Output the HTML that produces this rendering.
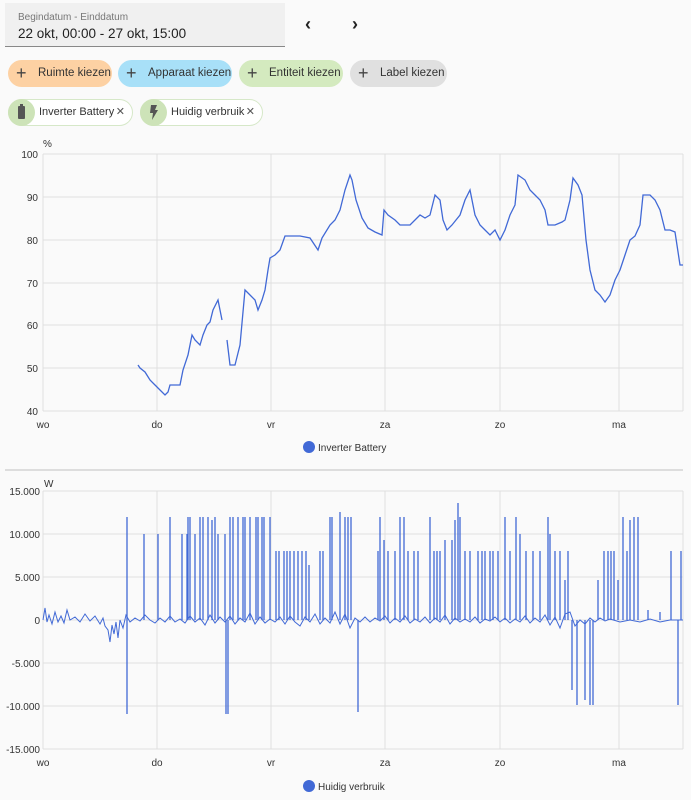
<!DOCTYPE html>
<html><head><meta charset="utf-8"><style>
body{margin:0;width:691px;height:800px;background:#fafafa;font-family:"Liberation Sans",sans-serif;overflow:hidden;position:relative}
.df{position:absolute;left:5px;top:3px;width:280px;height:43px;background:#f0f0f0;border-bottom:1px solid #888}
.df .l{position:absolute;left:13px;top:9px;font-size:10px;color:#777}
.df .v{position:absolute;left:13px;top:23px;font-size:13.5px;color:#222}
.nav{position:absolute;top:14px;font-size:18px;color:#222;font-weight:bold}
.chip{position:absolute;top:60px;height:27px;border-radius:14px;font-size:11.5px;color:#333;line-height:27px;box-sizing:border-box;padding-left:30px;white-space:nowrap}
.chip b{position:absolute;left:8px;top:0;font-weight:normal;font-size:18px;color:#444}
.ent{position:absolute;top:99px;height:27px;border-radius:14px;border:1px solid #d6e8c8;background:#fff;font-size:11px;color:#333;line-height:25px;box-sizing:border-box;padding-left:30px;white-space:nowrap}
.ent .ic{position:absolute;left:-1px;top:-1px;width:27px;height:27px;border-radius:14px;background:#cde3b8}
.ent .x{position:absolute;right:7px;top:0;font-size:11px;color:#555}
svg{position:absolute;left:0;top:0}
</style></head><body>
<div class="df"><div class="l">Begindatum - Einddatum</div><div class="v">22 okt, 00:00 - 27 okt, 15:00</div></div>
<div class="nav" style="left:305px">‹</div><div class="nav" style="left:352px">›</div>
<div class="chip" style="left:8px;width:104px;background:#fdd1a3"><b>+</b>Ruimte kiezen</div>
<div class="chip" style="left:118px;width:114px;background:#a8e0f8"><b>+</b>Apparaat kiezen</div>
<div class="chip" style="left:239px;width:104px;background:#d4eabf"><b>+</b>Entiteit kiezen</div>
<div class="chip" style="left:350px;width:97px;background:#e0e0e0"><b>+</b>Label kiezen</div>
<div class="ent" style="left:8px;width:125px"><div class="ic"><svg width="27" height="27"><rect x="10" y="7" width="7" height="13" rx="1" fill="#555"/><rect x="12" y="5" width="3" height="2" fill="#555"/></svg></div>Inverter Battery<span class="x">✕</span></div>
<div class="ent" style="left:140px;width:123px"><div class="ic"><svg width="27" height="27"><path d="M11 6h6l-2 5h3l-6 10 1-7h-3z" fill="#555"/></svg></div>Huidig verbruik<span class="x">✕</span></div>
<svg width="691" height="800" font-family="Liberation Sans" font-size="10" fill="#333">
<g stroke="#e0e0e0" stroke-width="1">
<path d="M43 154H683M43 197H683M43 240H683M43 283H683M43 325H683M43 368H683M43 411H683"/>
<path d="M43 154V411M157 154V411M271 154V411M385 154V411M500 154V411M619 154V411M683 154V411"/>
<path d="M43 491H683M43 534H683M43 577H683M43 620H683M43 663H683M43 706H683M43 749H683"/>
<path d="M43 491V749M157 491V749M271 491V749M385 491V749M500 491V749M619 491V749M683 491V749"/>
</g>
<path d="M5 470H683" stroke="#ddd" stroke-width="2"/>
<g text-anchor="end"><text x="38" y="158">100</text><text x="38" y="201">90</text><text x="38" y="244">80</text><text x="38" y="287">70</text><text x="38" y="329">60</text><text x="38" y="372">50</text><text x="38" y="415">40</text>
<text x="40" y="495">15.000</text><text x="40" y="538">10.000</text><text x="40" y="581">5.000</text><text x="40" y="624">0</text><text x="40" y="667">-5.000</text><text x="40" y="710">-10.000</text><text x="40" y="753">-15.000</text></g>
<text x="43" y="147">%</text><text x="44" y="487">W</text>
<g text-anchor="middle"><text x="43" y="428">wo</text><text x="157" y="428">do</text><text x="271" y="428">vr</text><text x="385" y="428">za</text><text x="500" y="428">zo</text><text x="619" y="428">ma</text>
<text x="43" y="766">wo</text><text x="157" y="766">do</text><text x="271" y="766">vr</text><text x="385" y="766">za</text><text x="500" y="766">zo</text><text x="619" y="766">ma</text></g>
<circle cx="309" cy="447" r="6" fill="#4169d6"/><text x="318" y="451">Inverter Battery</text>
<circle cx="309" cy="786" r="6" fill="#4169d6"/><text x="318" y="790">Huidig verbruik</text>
<polyline fill="none" stroke="#4169d6" stroke-width="1.3" points="138,365 140,368 145,372 150,380 155,385 160,390 165,395 168,392 170,385 175,385 180,385 183,370 188,355 192,335 195,340 200,345 203,335 207,325 210,322 213,310 218,300 220,310 222,320"/>
<polyline fill="none" stroke="#4169d6" stroke-width="1.3" points="227,340 230,365 235,365 240,345 245,290 250,295 255,300 258,310 262,300 265,290 268,270 270,258 275,255 280,250 285,236 290,236 300,236 310,238 318,250 322,238 330,225 335,220 340,210 345,190 350,175 352,180 356,200 362,218 368,228 375,232 382,235 384,210 388,215 395,220 400,225 410,225 420,215 425,218 430,215 435,195 440,200 443,220 447,230 452,225 456,220 460,215 465,200 470,190 475,215 480,225 485,230 490,235 495,230 500,240 505,230 510,215 515,205 518,175 525,180 530,190 535,195 540,200 545,210 548,225 555,225 562,222 565,220 570,200 573,178 578,185 582,195 586,240 590,270 595,290 600,295 605,302 610,295 615,280 620,270 625,255 630,240 635,236 640,225 643,195 650,195 655,200 660,210 665,230 670,230 675,232 680,265 683,265"/>
<polyline fill="none" stroke="#4169d6" stroke-width="1" points="43,620 45,608 47,622 49,615 52,624 55,612 58,622 61,616 64,623 67,610 70,620 75,617 80,622 85,614 90,621 95,616 100,624 103,618 105,626 108,630 110,642 112,625 114,634 116,622 118,638 120,620 123,628 126,615 130,622 135,618 140,621 145,615 150,620 155,623 160,618 165,622 170,616 175,622 180,619 185,623 190,616 195,622 200,618 205,625 210,615 215,623 220,617 225,622 230,616 235,624 240,618 245,622 250,613 255,624 260,617 265,623 270,619 275,622 280,617 285,624 290,616 295,622 300,626 305,617 310,622 315,614 320,624 325,618 330,623 335,612 340,624 345,614 350,628 355,618 360,622 365,617 370,622 375,618 380,621 385,616 390,623 395,618 400,622 405,616 410,623 415,619 420,622 425,617 430,623 435,618 440,622 445,615 450,624 455,618 460,622 465,619 470,622 475,617 480,623 485,619 490,621 495,617 500,622 505,618 510,623 515,619 520,622 525,616 530,623 535,618 540,622 545,615 550,625 555,617 560,628 565,614 570,612 575,626 580,620 585,624 590,618 595,622 600,618 605,621 610,619 620,622 630,620 640,622 650,619 660,622 670,620 683,620"/>
<path fill="none" stroke="#4169d6" stroke-width="1.3" d="M127 620V517M127 620V714M144 620V534M158 620V534M170 620V517M182 620V534M187 620V534M188 620V517M190 620V517M195 620V534M200 620V517M203 620V517M208 620V517M212 620V520M215 620V517M218 620V534M225 620V534M226 620V714M228 620V714M230 620V517M233 620V517M238 620V517M243 620V517M245 620V517M250 620V517M256 620V517M258 620V517M262 620V517M264 620V517M270 620V517M276 620V551M279 620V551M284 620V551M287 620V551M290 620V551M294 620V551M298 620V551M302 620V551M306 620V551M309 620V565M320 620V551M323 620V551M330 620V517M332 620V517M340 620V512M345 620V517M348 620V517M351 620V517M358 620V712M378 620V551M380 620V517M384 620V540M388 620V551M395 620V551M400 620V517M404 620V517M408 620V551M414 620V551M418 620V551M430 620V517M434 620V551M437 620V551M440 620V551M445 620V540M452 620V540M455 620V520M458 620V503M460 620V517M465 620V551M470 620V551M478 620V551M482 620V551M485 620V551M490 620V551M493 620V551M498 620V551M505 620V517M510 620V551M516 620V517M520 620V534M526 620V551M533 620V551M540 620V551M548 620V517M550 620V534M555 620V551M560 620V551M565 620V580M568 620V551M572 620V690M577 620V705M585 620V700M590 620V705M593 620V705M598 620V580M604 620V551M608 620V551M611 620V551M614 620V551M618 620V580M623 620V517M627 620V551M630 620V520M634 620V517M638 620V517M648 620V610M660 620V612M671 620V551M678 620V705M681 620V551"/>
</svg>
</body></html>
